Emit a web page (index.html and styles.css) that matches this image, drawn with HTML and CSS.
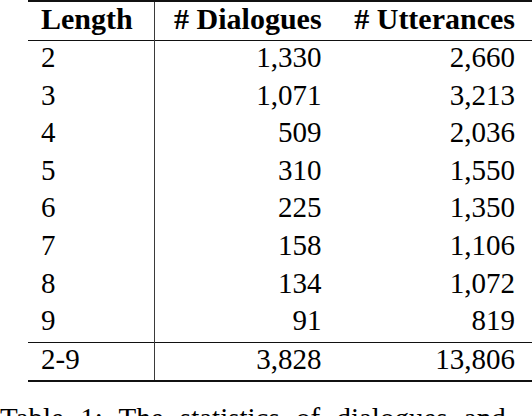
FILE: index.html
```html
<!DOCTYPE html>
<html lang="en">
  <head>
  <link rel="stylesheet" href="styles.css">
  </head>
  <body>
    <table class="stats">
      <thead>
        <tr><th class="len">Length</th><th class="num">#&nbsp;Dialogues</th><th class="num last"># Utterances</th></tr>
      </thead>
      <tbody>
        <tr><td class="len">2</td><td class="num">1,330</td><td class="num last">2,660</td></tr>
        <tr><td class="len">3</td><td class="num">1,071</td><td class="num last">3,213</td></tr>
        <tr><td class="len">4</td><td class="num">509</td><td class="num last">2,036</td></tr>
        <tr><td class="len">5</td><td class="num">310</td><td class="num last">1,550</td></tr>
        <tr><td class="len">6</td><td class="num">225</td><td class="num last">1,350</td></tr>
        <tr><td class="len">7</td><td class="num">158</td><td class="num last">1,106</td></tr>
        <tr><td class="len">8</td><td class="num">134</td><td class="num last">1,072</td></tr>
        <tr><td class="len">9</td><td class="num">91</td><td class="num last">819</td></tr>
      </tbody>
      <tfoot>
        <tr><td class="len">2-9</td><td class="num">3,828</td><td class="num last">13,806</td></tr>
      </tfoot>
    </table>
    <p class="caption">Table 1: The statistics of dialogues and</p>
  </body>
</html>
```

FILE: styles.css
```css
html, body { padding: 0; margin: 0; background: #fff; }
body {
  color: #000; font-size: 29px; line-height: 33px;
  font-family: "Liberation Serif", Tinos, "Nimbus Roman", serif;
  overflow: hidden;
}
.stats {
  border-collapse: collapse; margin-left: 28px; width: 504px;
  border-top: 2px solid #111; border-bottom: 2px solid #111;
}
.stats th, .stats td { padding: 0 13px 4.6px; white-space: nowrap; }
.stats th { font-weight: bold; font-size: 30px; padding: 0 13px 5px; }
.stats thead tr { border-bottom: 1.4px solid #111; }
.stats tfoot tr { border-top: 1.4px solid #111; }
.len { width: 100px; text-align: left; border-right: 1px solid #3a3a3a; }
.num { text-align: right; }
.last { padding-right: 17px !important; }
.caption { margin: 20px 0 0; white-space: nowrap; word-spacing: 9px; }
```
